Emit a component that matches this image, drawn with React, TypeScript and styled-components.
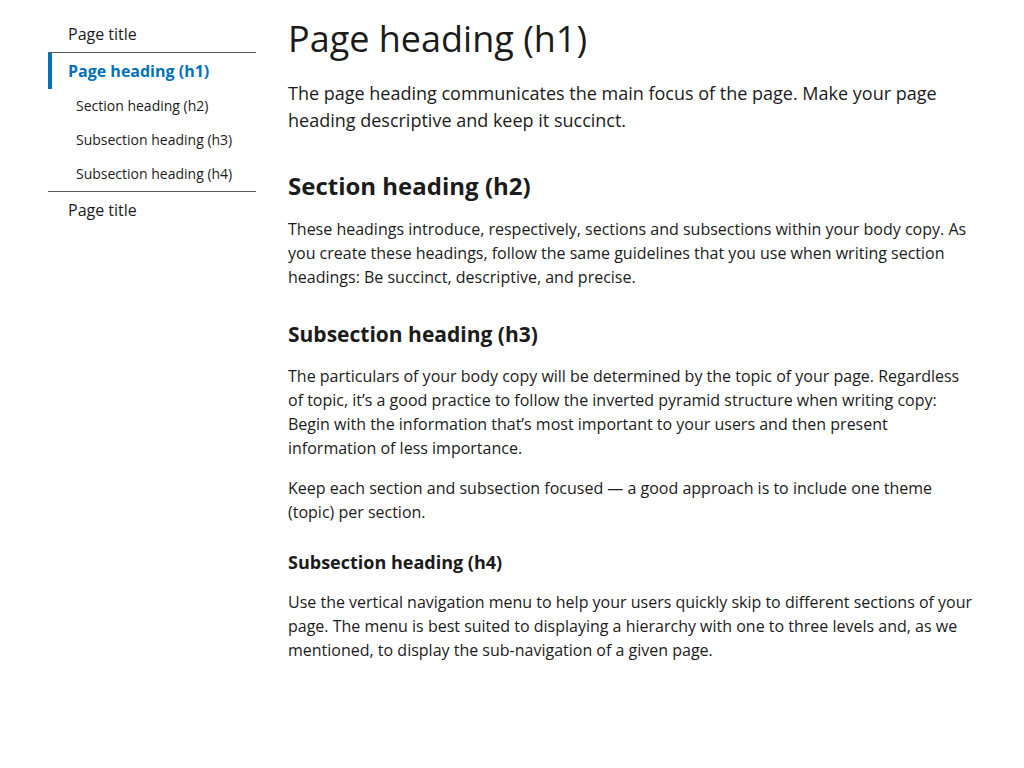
import React from "react";
import styled, { createGlobalStyle } from "styled-components";

const Global = createGlobalStyle`
  html, body { margin: 0; padding: 0; background: #fff; }
  body {
    font-family: "Open Sans", "Liberation Sans", sans-serif;
    color: #1b1b1b;
    -webkit-font-smoothing: antialiased;
  }
`;

const Page = styled.div`
  display: flex;
  align-items: flex-start;
  gap: 32px;
  padding: 16px 40px 40px 48px;
`;

const SideNav = styled.nav`
  width: 208px;
  flex: 0 0 208px;
`;

const NavList = styled.ul`
  list-style: none;
  margin: 0;
  padding: 0;
`;

const NavItem = styled.li<{ $divider?: boolean }>`
  border-top: ${(p) => (p.$divider ? "1px solid #565c65" : "none")};
`;

const NavLink = styled.a<{ $active?: boolean }>`
  display: block;
  padding: 8px 20px 8px ${(p) => (p.$active ? "16px" : "20px")};
  font-size: 16px;
  line-height: 20px;
  color: ${(p) => (p.$active ? "#0071bc" : "#1b1b1b")};
  font-weight: ${(p) => (p.$active ? 700 : 400)};
  border-left: ${(p) => (p.$active ? "4px solid #0071bc" : "none")};
  text-decoration: none;
`;

const SubLink = styled.a`
  display: block;
  padding: 8px 20px 8px 28px;
  font-size: 14px;
  line-height: 18px;
  color: #1b1b1b;
  text-decoration: none;
`;

const Main = styled.main`
  flex: 1;
  max-width: 690px;
`;

const H1 = styled.h1`
  margin: 0;
  font-size: 36px;
  line-height: 46px;
  font-weight: 400;
`;

const Lead = styled.p`
  margin: 18px 0 0;
  font-size: 18px;
  line-height: 27px;
`;

const H2 = styled.h2`
  margin: 37px 0 0;
  font-size: 24px;
  line-height: 30px;
  font-weight: 700;
`;

const H3 = styled.h3`
  margin: 31px 0 0;
  font-size: 21px;
  line-height: 28px;
  font-weight: 700;
`;

const H4 = styled.h4`
  margin: 26px 0 0;
  font-size: 18px;
  line-height: 24px;
  font-weight: 700;
`;

const Body = styled.p`
  margin: 16px 0 0;
  font-size: 16px;
  line-height: 24px;
`;

export default function App() {
  return (
    <>
      <Global />
      <Page>
        <SideNav>
          <NavList>
            <NavItem>
              <NavLink href="#">Page title</NavLink>
            </NavItem>
            <NavItem $divider>
              <NavLink href="#" $active>
                Page heading (h1)
              </NavLink>
              <NavList>
                <li>
                  <SubLink href="#">Section heading (h2)</SubLink>
                </li>
                <li>
                  <SubLink href="#">Subsection heading (h3)</SubLink>
                </li>
                <li>
                  <SubLink href="#">Subsection heading (h4)</SubLink>
                </li>
              </NavList>
            </NavItem>
            <NavItem $divider>
              <NavLink href="#">Page title</NavLink>
            </NavItem>
          </NavList>
        </SideNav>
        <Main>
          <H1>Page heading (h1)</H1>
          <Lead>
            The page heading communicates the main focus of the page. Make your
            page heading descriptive and keep it succinct.
          </Lead>
          <H2>Section heading (h2)</H2>
          <Body>
            These headings introduce, respectively, sections and subsections
            within your body copy. As you create these headings, follow the same
            guidelines that you use when writing section headings: Be succinct,
            descriptive, and precise.
          </Body>
          <H3>Subsection heading (h3)</H3>
          <Body>
            The particulars of your body copy will be determined by the topic of
            your page. Regardless of topic, it’s a good practice to follow the
            inverted pyramid structure when writing copy: Begin with the
            information that’s most important to your users and then present
            information of less importance.
          </Body>
          <Body>
            Keep each section and subsection focused — a good approach is to
            include one theme (topic) per section.
          </Body>
          <H4>Subsection heading (h4)</H4>
          <Body>
            Use the vertical navigation menu to help your users quickly skip to
            different sections of your page. The menu is best suited to
            displaying a hierarchy with one to three levels and, as we
            mentioned, to display the sub-navigation of a given page.
          </Body>
        </Main>
      </Page>
    </>
  );
}
